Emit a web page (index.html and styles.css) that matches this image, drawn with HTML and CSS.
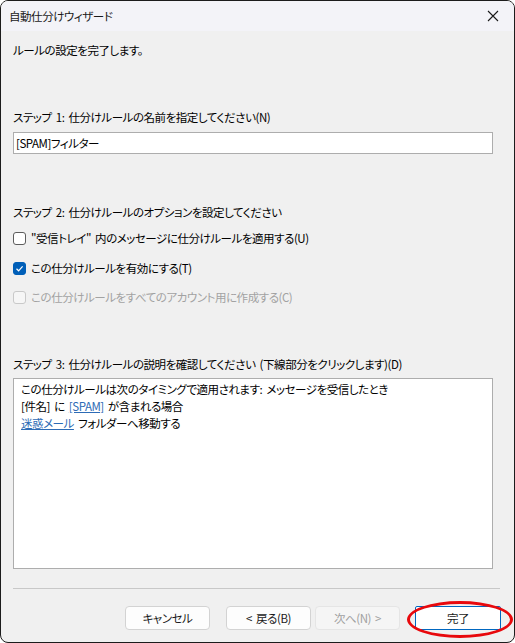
FILE: index.html
```html
<!DOCTYPE html>
<html lang="ja">
<head>
    <meta charset="UTF-8">
    <title>自動仕分けウィザード</title>
    <link rel="stylesheet" href="styles.css">
</head>
<body>
    <div class="window">
        <div class="titlebar">
            <span class="title">自動仕分けウィザード</span>
            <svg class="close" width="12" height="12" viewBox="0 0 12 12">
                <path d="M1 1 L11 11 M11 1 L1 11" stroke="#1a1a1a" stroke-width="1.1" fill="none"/>
            </svg>
        </div>

        <div class="content">
            <div class="intro">ルールの設定を完了します。</div>

            <div class="label step1">ステップ 1: 仕分けルールの名前を指定してください(N)</div>
            <div class="field">[SPAM]フィルター</div>

            <div class="label step2">ステップ 2: 仕分けルールのオプションを設定してください</div>
            <div class="check first">
                <span class="box"></span>
                <span>"受信トレイ" 内のメッセージに仕分けルールを適用する(U)</span>
            </div>
            <div class="check second">
                <span class="box checked">
                    <svg width="13" height="13" viewBox="0 0 13 13">
                        <path d="M3.5 6.8 L5.6 8.8 L9.6 4.4" stroke="#fff" stroke-width="1.2" fill="none"/>
                    </svg>
                </span>
                <span>この仕分けルールを有効にする(T)</span>
            </div>
            <div class="check third disabled">
                <span class="box"></span>
                <span>この仕分けルールをすべてのアカウント用に作成する(C)</span>
            </div>

            <div class="label step3">ステップ 3: 仕分けルールの説明を確認してください (下線部分をクリックします)(D)</div>
            <div class="desc">
                <div>この仕分けルールは次のタイミングで適用されます: メッセージを受信したとき</div>
                <div>[件名] に <a class="link spam">[SPAM]</a> が含まれる場合</div>
                <div><a class="link">迷惑メール</a> フォルダーへ移動する</div>
            </div>

            <div class="separator"></div>

            <div class="buttons">
                <button class="btn cancel">キャンセル</button>
                <button class="btn back">&lt; 戻る(B)</button>
                <button class="btn next" disabled>次へ(N) &gt;</button>
                <button class="btn finish">完了</button>
                <div class="highlight"></div>
            </div>
        </div>
    </div>
</body>
</html>
```

FILE: styles.css
```css
html, body {
    margin: 0;
    padding: 0;
    background: #ffffff;
}

body {
    font-family: "Noto Sans CJK JP", "Noto Sans", sans-serif;
    font-size: 11.5px;
    letter-spacing: -0.45px;
    word-spacing: 2px;
    font-feature-settings: "palt";
    color: #000;
}

.window {
    width: 515px;
    height: 643px;
    box-sizing: border-box;
    border: 1px solid #1c1c1c;
    border-radius: 8px;
    overflow: hidden;
    background: #f0f0f0;
    display: flex;
    flex-direction: column;
}

.titlebar {
    height: 30px;
    background: #f3f3f8;
    display: flex;
    align-items: center;
    justify-content: space-between;
    padding: 0 15px 0 8px;
}

.title {
    color: #1a1a1a;
    line-height: 16px;
}

.content {
    position: relative;
    padding: 0 13px 0 12px;
    line-height: 16px;
}

.intro {
    margin-top: 11px;
}

.label.step1 { margin-top: 51px; }
.label.step2 { margin-top: 50px; }
.label.step3 { margin-top: 51px; }

.field {
    margin-top: 7px;
    width: 480px;
    height: 22px;
    box-sizing: border-box;
    border: 1px solid #adadad;
    background: #fff;
    padding: 2px 2px;
    line-height: 16px;
}

.check {
    display: flex;
    align-items: center;
    gap: 5px;
}

.check.first { margin-top: 10px; }
.check.second { margin-top: 14px; }
.check.third { margin-top: 13px; }

.box {
    width: 13px;
    height: 13px;
    box-sizing: border-box;
    border: 1px solid #5d5d5d;
    border-radius: 3px;
    background: #fff;
    display: flex;
}

.box.checked {
    background: #005fb8;
    border-color: #005fb8;
}

.box.checked svg {
    margin: -1px;
}

.check.disabled {
    color: #a2a2a2;
}

.check.disabled .box {
    border-color: #c9c9c9;
    background: #f6f6f6;
}

.desc {
    margin-top: 6px;
    width: 480px;
    height: 191px;
    box-sizing: border-box;
    border: 1px solid #adadad;
    background: #fff;
    padding: 2px 7px;
    line-height: 17px;
}

.link {
    color: #2d6bb5;
    text-decoration: underline;
}

.separator {
    margin-top: 19px;
    width: 487px;
    height: 1px;
    background: #c8c8c8;
}

.buttons {
    position: relative;
    margin-top: 17px;
    display: flex;
    justify-content: flex-end;
}

.btn {
    font-family: inherit;
    font-size: 11.5px;
    letter-spacing: -0.45px;
    word-spacing: 2px;
    font-feature-settings: "palt";
    height: 24px;
    width: 85px;
    box-sizing: border-box;
    padding: 0;
    border: 1px solid #d3d3d3;
    border-radius: 4px;
    background: #fdfdfd;
    color: #1a1a1a;
}

.btn.back { margin-left: 16px; }
.btn.next {
    margin-left: 4px;
    background: #f5f5f5;
    border-color: #e5e5e5;
    color: #a0a0a0;
}
.btn.finish {
    margin-left: 15px;
    width: 86px;
    border: 1px solid #0067c0;
    border-radius: 2px;
    background: #fff;
}

.highlight {
    position: absolute;
    right: -12px;
    top: -5px;
    width: 106px;
    height: 37px;
    box-sizing: border-box;
    border: 3px solid #e8080c;
    border-radius: 50%;
    pointer-events: none;
}
```
